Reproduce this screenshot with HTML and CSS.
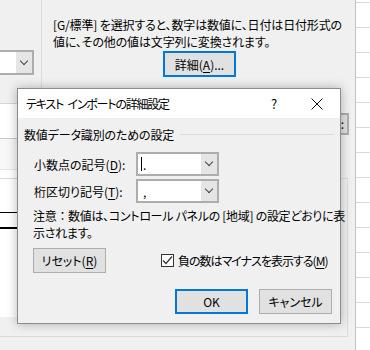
FILE: index.html
```html
<!DOCTYPE html>
<html lang="ja">

<head>
    <meta charset="UTF-8" />
    <meta name="viewport" content="width=device-width, initial-scale=1.0" />
    <title>テキスト インポートの詳細設定</title>
    <link rel="stylesheet" href="styles.css">
</head>

<body>
    <!-- 背後のウィンドウ -->
    <div class="backdrop">
        <div class="side-line"></div>
        <div class="side-combo">
            <span class="field"></span>
            <span class="drop"><i class="chev"></i></span>
        </div>
        <div class="side-list">
            <div class="band band-a"></div>
            <div class="band band-b"></div>
            <div class="band band-c"></div>
        </div>
        <div class="group-box"></div>
        <div class="side-btn">:</div>
        <div class="sheet"></div>

        <p class="help-text">[G/標準] を選択すると、数字は数値に、日付は日付形式の<br>値に、その他の値は文字列に変換されます。</p>
        <button class="btn btn-default detail-btn">詳細(<u>A</u>)...</button>
    </div>

    <!-- ダイアログ -->
    <div class="dialog">
        <div class="titlebar">
            <span class="title">テキスト インポートの詳細設定</span>
            <span class="tb-help">?</span>
            <span class="tb-close">
                <svg width="12" height="12" viewBox="0 0 12 12">
                    <path d="M0.5 0.5 L11.5 11.5 M11.5 0.5 L0.5 11.5" stroke="#111" stroke-width="1" fill="none" />
                </svg>
            </span>
        </div>
        <div class="dialog-body">
            <div class="group-head">
                <span>数値データ識別のための設定</span>
                <span class="rule"></span>
            </div>

            <div class="field-row first">
                <label>小数点の記号(<u>D</u>):</label>
                <div class="combo">
                    <span class="value"><i class="caret"></i>.</span>
                    <span class="drop"><i class="chev"></i></span>
                </div>
            </div>
            <div class="field-row">
                <label>桁区切り記号(<u>T</u>):</label>
                <div class="combo">
                    <span class="value comma">,</span>
                    <span class="drop"><i class="chev"></i></span>
                </div>
            </div>

            <p class="note">注意<span class="wide">：</span>数値は、コントロール パネルの [地域] の設定どおりに表<br>示されます。</p>

            <div class="option-row">
                <button class="btn">リセット(<u>R</u>)</button>
                <label class="check">
                    <span class="box">
                        <svg width="11" height="11" viewBox="0 0 11 11">
                            <path d="M1 5.5 L4 8.5 L10 1.5" stroke="#333" stroke-width="1.2" fill="none" />
                        </svg>
                    </span>
                    <span class="check-text">負の数はマイナスを表示する(<u>M</u>)</span>
                </label>
            </div>

            <div class="actions">
                <button class="btn btn-default">OK</button>
                <button class="btn">キャンセル</button>
            </div>
        </div>
    </div>
</body>

</html>
```

FILE: styles.css
```css
* {
    box-sizing: border-box;
}

body {
    margin: 0;
    width: 370px;
    height: 350px;
    overflow: hidden;
    position: relative;
    background: #f0f0f0;
    color: #000;
    font-family: "Noto Sans CJK JP", "Noto Sans", sans-serif;
    font-size: 12px;
    line-height: 17px;
    font-feature-settings: "palt";
}

u {
    text-decoration: underline;
    text-underline-offset: 2px;
}

/* 背後のウィンドウ */
.backdrop {
    position: absolute;
    inset: 0;
}

.side-line {
    position: absolute;
    left: 41px;
    top: 0;
    width: 1px;
    height: 90px;
    background: #dcdcdc;
}

.side-combo {
    position: absolute;
    left: -50px;
    top: 50px;
    width: 84px;
    height: 25px;
    display: flex;
    border: 2px solid #adadad;
    background: #fff;
}

.side-combo .field {
    flex: 1;
}

.drop {
    width: 16px;
    background: #e5e5e5;
    display: flex;
    align-items: center;
    justify-content: center;
}

.chev {
    width: 6px;
    height: 6px;
    border-right: 1px solid #444;
    border-bottom: 1px solid #444;
    transform: translateY(-2px) rotate(45deg);
}

.side-list {
    position: absolute;
    left: 0;
    top: 103px;
    width: 30px;
    height: 214px;
    background: #fff;
    border-top: 1px solid #d6d6d6;
}

.band {
    position: absolute;
    left: 0;
    right: 0;
}

.band-a {
    top: 34px;
    height: 32px;
    background: #f7f7f7;
    border-top: 1px solid #c8c8c8;
    border-bottom: 1px solid #e6e6e6;
}

.band-b {
    top: 108px;
    height: 1px;
    background: #000;
}

.band-c {
    top: 123px;
    height: 2px;
    background: #000;
}

.group-box {
    position: absolute;
    left: -2px;
    top: 178px;
    width: 350px;
    height: 159px;
    border: 1px solid #dcdcdc;
}

.side-btn {
    position: absolute;
    left: 318px;
    top: 113px;
    width: 31px;
    height: 22px;
    border: 2px solid #adadad;
    background: #e1e1e1;
    text-align: right;
    padding-right: 3px;
    line-height: 18px;
}

.sheet {
    position: absolute;
    left: 355px;
    top: 0;
    width: 15px;
    height: 350px;
    border-left: 1px solid #c4c4c4;
    background: #fff repeating-linear-gradient(to bottom, transparent 0 24px, #dadada 24px 25px);
    background-position: 0 3px;
}

.help-text {
    position: absolute;
    left: 53px;
    top: 16px;
    margin: 0;
    white-space: nowrap;
    letter-spacing: -0.15px;
}

.btn {
    appearance: none;
    width: 73px;
    height: 25px;
    padding: 0;
    border: 1px solid #adadad;
    background: #e1e1e1;
    font: inherit;
    color: #000;
}

.btn-default {
    border: 2px solid #0078d7;
}

.detail-btn {
    position: absolute;
    left: 163px;
    top: 51px;
    height: 26px;
}

/* ダイアログ */
.dialog {
    position: absolute;
    left: 17px;
    top: 88px;
    width: 324px;
    height: 236px;
    border: 1px solid #8c8c8c;
    background: #f0f0f0;
    box-shadow: 0 0 10px rgba(0, 0, 0, 0.28);
}

.titlebar {
    height: 29px;
    background: #fff;
    display: flex;
    align-items: center;
    padding-left: 8px;
}

.title {
    flex: 1;
    letter-spacing: -1.2px;
    word-spacing: 3px;
}

.tb-help {
    width: 30px;
    text-align: center;
    font-size: 13px;
}

.tb-close {
    width: 46px;
    margin-left: 5px;
    display: flex;
    justify-content: center;
}

.dialog-body {
    padding: 8px 8px 0 6px;
}

.group-head {
    display: flex;
    align-items: center;
    letter-spacing: -0.15px;
}

.group-head .rule {
    flex: 1;
    height: 1px;
    background: #dcdcdc;
    margin: 0 -2px 0 6px;
}

.field-row {
    display: flex;
    align-items: center;
    padding-left: 10px;
    margin-top: 3px;
}

.field-row.first {
    margin-top: 9px;
}

.field-row label {
    width: 102px;
}

.combo {
    width: 83px;
    height: 24px;
    display: flex;
    border: 2px solid #adadad;
    background: #fff;
}

.combo .value {
    flex: 1;
    padding-left: 3px;
    line-height: 19px;
    display: flex;
    align-items: center;
}

.combo .value.comma {
    padding-left: 5px;
}

.caret {
    width: 1px;
    height: 14px;
    background: #000;
    margin-right: 1px;
}

.note {
    margin: 4px 0 0 9px;
    white-space: nowrap;
    letter-spacing: -0.3px;
}

.note .wide {
    font-feature-settings: normal;
}

.option-row {
    display: flex;
    align-items: center;
    margin-top: 7px;
    padding-left: 9px;
}

.check {
    display: flex;
    align-items: center;
    margin-left: 55px;
    white-space: nowrap;
}

.check .box {
    width: 13px;
    height: 13px;
    border: 1px solid #333;
    background: #fff;
    margin-right: 4px;
    display: flex;
    align-items: center;
    justify-content: center;
}

.check-text {
    letter-spacing: -1px;
}

.actions {
    display: flex;
    justify-content: flex-end;
    gap: 11px;
    margin-top: 16px;
}
```
